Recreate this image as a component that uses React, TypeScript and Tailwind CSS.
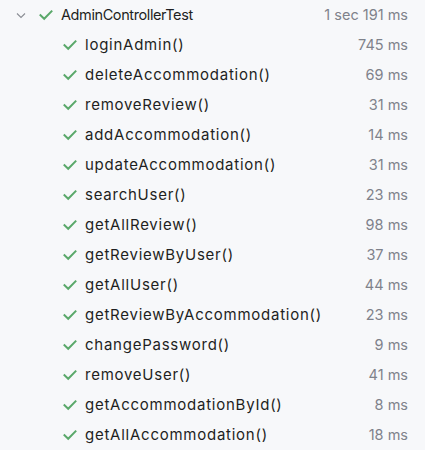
import React from "react";

const rows: [string, string][] = [
  ["loginAdmin()", "745 ms"],
  ["deleteAccommodation()", "69 ms"],
  ["removeReview()", "31 ms"],
  ["addAccommodation()", "14 ms"],
  ["updateAccommodation()", "31 ms"],
  ["searchUser()", "23 ms"],
  ["getAllReview()", "98 ms"],
  ["getReviewByUser()", "37 ms"],
  ["getAllUser()", "44 ms"],
  ["getReviewByAccommodation()", "23 ms"],
  ["changePassword()", "9 ms"],
  ["removeUser()", "41 ms"],
  ["getAccommodationById()", "8 ms"],
  ["getAllAccommodation()", "18 ms"],
];

function Check() {
  return (
    <svg width="14" height="14" viewBox="0 0 14 14" className="shrink-0">
      <path d="M1.5 7.2 L5.2 10.8 L12.5 3.3" fill="none" stroke="#5aa86a" strokeWidth="2" strokeLinecap="square" />
    </svg>
  );
}

function Chevron() {
  return (
    <svg width="12" height="12" viewBox="0 0 12 12" className="shrink-0">
      <path d="M2 4.5 L6 8.5 L10 4.5" fill="none" stroke="#8a8d94" strokeWidth="1.1" />
    </svg>
  );
}

export default function App() {
  return (
    <div
      className="w-[425px] h-[450px] bg-[#f7f8fa] text-[#1e1f22] overflow-hidden"
      style={{ fontFamily: "Inter, 'Noto Sans', sans-serif" }}
    >
      <div className="flex items-center h-[30px] pr-[17px]">
        <div className="pl-[15px] w-[39px] flex items-center">
          <Chevron />
        </div>
        <Check />
        <span className="ml-[8px] text-[14.5px] tracking-[-0.4px]">AdminControllerTest</span>
        <span className="ml-auto text-[14.5px] text-[#7f828b]">1 sec 191 ms</span>
      </div>
      {rows.map(([n, t]) => (
        <div key={n} className="flex items-center h-[30px] pr-[17px] pl-[63px]">
          <Check />
          <span className="ml-[8px] text-[15px] tracking-[0.75px]">{n}</span>
          <span className="ml-auto text-[14.5px] text-[#7f828b]">{t}</span>
        </div>
      ))}
    </div>
  );
}
